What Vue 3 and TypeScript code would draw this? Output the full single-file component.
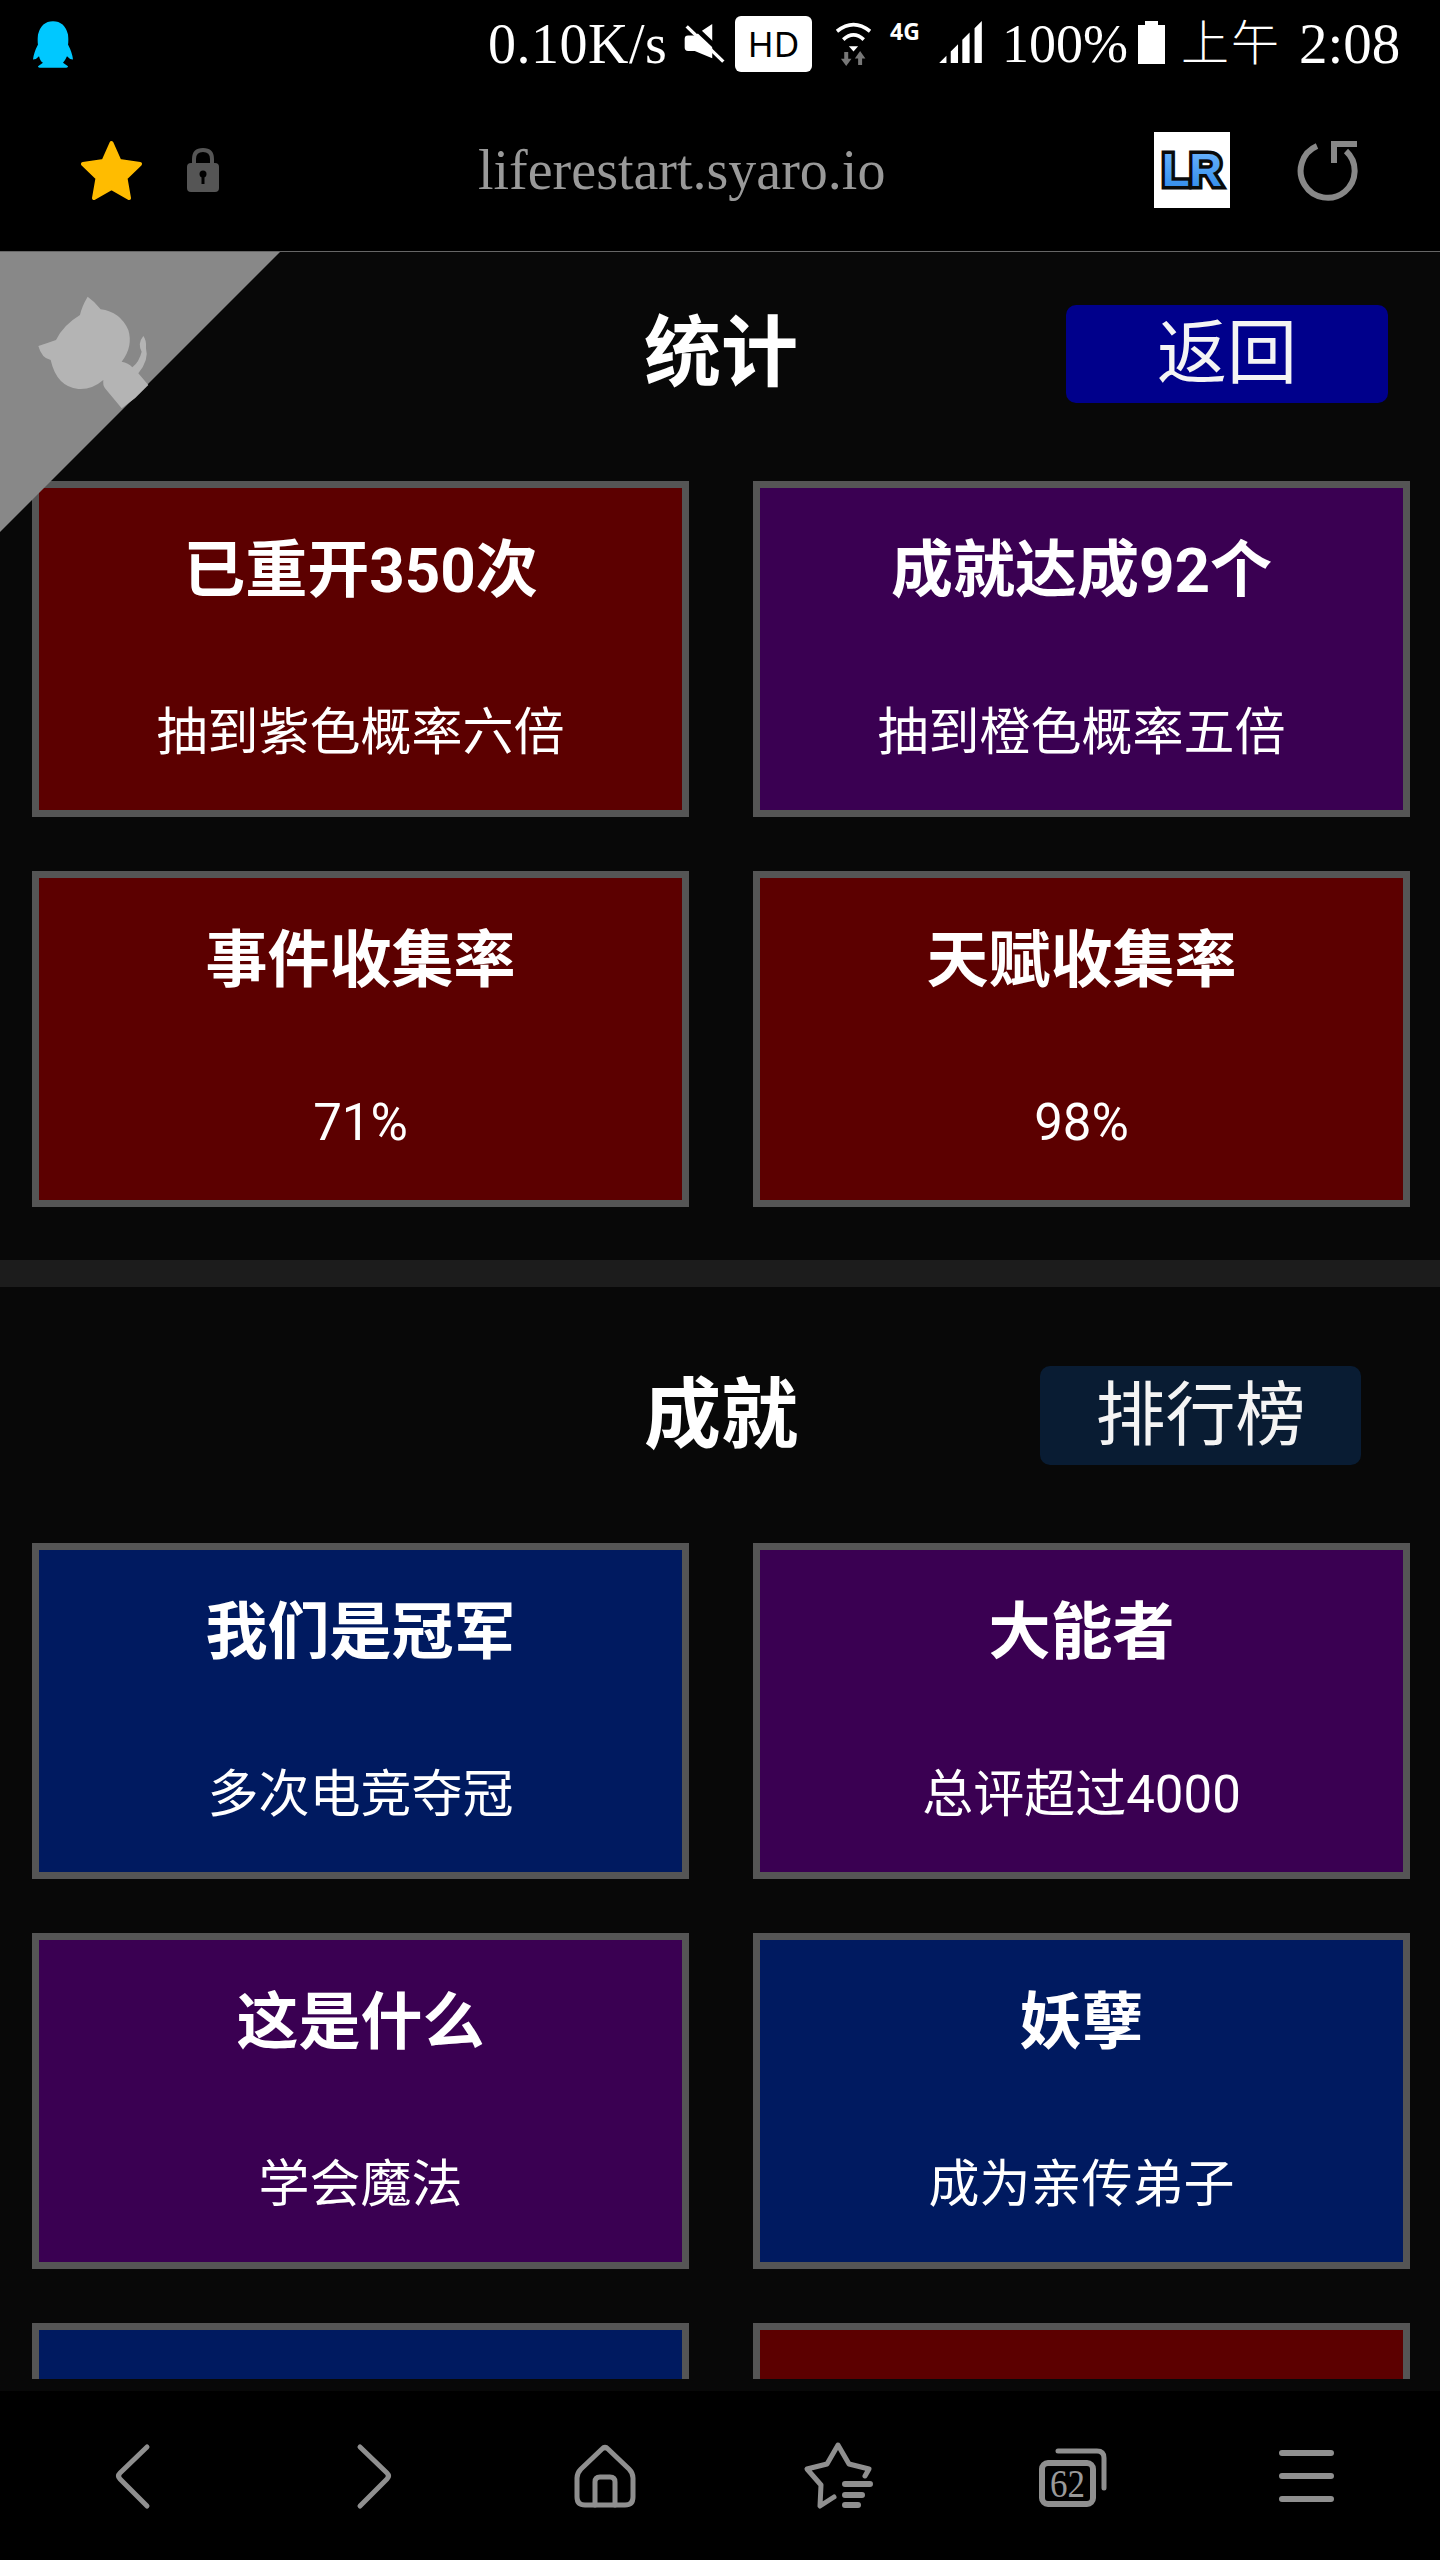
<script setup lang="ts">
type Tone = 'red' | 'purple' | 'blue';

interface Card {
  title: string;
  desc: string;
  tone: Tone;
}

const statCards: Card[] = [
  { title: '已重开350次', desc: '抽到紫色概率六倍', tone: 'red' },
  { title: '成就达成92个', desc: '抽到橙色概率五倍', tone: 'purple' },
  { title: '事件收集率', desc: '71%', tone: 'red' },
  { title: '天赋收集率', desc: '98%', tone: 'red' }
];

const achievementCards: Card[] = [
  { title: '我们是冠军', desc: '多次电竞夺冠', tone: 'blue' },
  { title: '大能者', desc: '总评超过4000', tone: 'purple' },
  { title: '这是什么', desc: '学会魔法', tone: 'purple' },
  { title: '妖孽', desc: '成为亲传弟子', tone: 'blue' },
  { title: '', desc: '', tone: 'blue' },
  { title: '', desc: '', tone: 'red' }
];
</script>

<template>
  <div class="phone">
    <div class="status-bar">
      <svg class="penguin" viewBox="40 40 120 140" width="40" height="47">
        <path fill="#00c8ff" d="M100 40Q135 40 145 80Q147 100 145 110Q158 135 160 155Q150 155 142 145Q135 160 130 165L145 175Q145 180 135 180L65 180Q55 180 55 175L70 165Q62 160 58 145Q50 155 40 155Q42 135 55 110Q53 100 55 80Q65 40 100 40Z" />
      </svg>
      <div class="status-right">
        <span class="speed">0.10K/s</span>
        <svg class="mute" viewBox="35 45 125 125" width="42" height="42">
          <path fill="#fff" d="M40 92Q40 82 50 82L70 82L122 48V150L70 128L50 128Q40 128 40 118Z" />
          <path stroke="#000" stroke-width="14" d="M62 50L172 155" />
          <path stroke="#fff" stroke-width="10" d="M46 55L155 160" />
        </svg>
        <div class="hd">HD</div>
        <svg class="wifi" viewBox="480 35 130 140" width="43" height="47">
          <path fill="none" stroke="#fff" stroke-width="11" d="M495 65Q545 25 595 65" />
          <path fill="none" stroke="#fff" stroke-width="11" d="M514 90Q545 62 576 90" />
          <path fill="#fff" d="M531 110H559L545 126Z" />
          <path fill="#777" d="M517 128H529V148H539L523 170L507 148H517Z" />
          <path fill="#777" d="M565 125L581 147H571V167H559V147H549Z" />
        </svg>
        <span class="net">4G</span>
        <svg class="signal" viewBox="808 43 129 127" width="43" height="42">
          <path fill="#fff" d="M808 170L830 148V170ZM843 135L865 113V170H843ZM878 100L900 78V170H878ZM915 65L937 43V170H915Z" />
        </svg>
        <span class="percent">100%</span>
        <svg class="battery" viewBox="0 0 27 43" width="27" height="43">
          <path fill="#fff" d="M7 0H20V4H27V43H0V4H7Z" />
        </svg>
        <span class="ampm">上午</span>
        <span class="clock">2:08</span>
      </div>
    </div>

    <div class="url-bar">
      <svg class="fav" viewBox="0 0 61 60" width="61" height="60">
        <path fill="#ffbc00" stroke="#ffbc00" stroke-width="4" stroke-linejoin="round" d="M30.5 3L38.5 21L59 24L44.5 38L48 58L30.5 48L13 58L16.5 38L2 24L22.5 21Z" />
      </svg>
      <svg class="lock" viewBox="0 0 32 44" width="32" height="44">
        <path fill="none" stroke="#555" stroke-width="4" d="M7 18V11Q7 2 16 2Q25 2 25 11V18" />
        <rect y="15" width="32" height="29" rx="4" fill="#555" />
        <circle cx="16" cy="26" r="3.5" fill="#000" />
        <rect x="14.5" y="27" width="3" height="9" fill="#000" />
      </svg>
      <span class="address">liferestart.syaro.io</span>
      <svg class="logo" viewBox="0 0 76 76" width="76" height="76">
        <defs>
          <linearGradient id="lrFill" x1="0" y1="0" x2="0" y2="1">
            <stop offset="0" stop-color="#70b8ff" />
            <stop offset="1" stop-color="#2a86e8" />
          </linearGradient>
        </defs>
        <rect width="76" height="76" fill="#fff" />
        <text class="logo-text" x="8" y="54" textLength="60" lengthAdjust="spacingAndGlyphs">LR</text>
      </svg>
      <svg class="reload" viewBox="0 0 64 64" width="64" height="64">
        <g fill="none" stroke="#888" stroke-width="6">
          <path d="M21 8A27 27 0 1 0 50 13" />
          <path d="M38 25V6H61" />
        </g>
      </svg>
    </div>

    <div class="viewport">
      <div class="page">
        <section class="section first">
          <header class="head">
            <h2 class="head-title">统计</h2>
            <button class="head-btn back">返回</button>
          </header>
          <div class="grid">
            <div v-for="card in statCards" :key="card.title" class="card" :class="card.tone">
              <div class="card-title">{{ card.title }}</div>
              <div class="card-desc">{{ card.desc }}</div>
            </div>
          </div>
        </section>
        <div class="divider"></div>
        <section class="section second">
          <header class="head">
            <h2 class="head-title">成就</h2>
            <button class="head-btn rank">排行榜</button>
          </header>
          <div class="grid">
            <div v-for="(card, i) in achievementCards" :key="i" class="card" :class="card.tone">
              <div class="card-title">{{ card.title }}</div>
              <div class="card-desc">{{ card.desc }}</div>
            </div>
          </div>
        </section>
      </div>

      <svg class="corner" viewBox="0 0 280 280" width="280" height="280">
        <path fill="#888" d="M0 0H280L0 280Z" />
        <g transform="translate(20 28) scale(0.3333)">
          <path fill="#b4b4b4" d="M203 50Q225 65 242 88Q300 95 325 150Q340 200 305 245Q325 248 337 262Q358 245 365 215Q352 190 370 168Q380 180 378 205Q388 240 355 280L385 315L345 355L305 385L255 325Q248 315 250 300Q215 330 175 327Q110 320 92 240Q65 235 55 198Q80 190 108 180Q130 135 180 105Q185 80 203 50Z" />
        </g>
      </svg>
    </div>
    <div class="viewport-end"></div>

    <nav class="nav">
      <svg viewBox="0 0 80 80" width="80" height="80">
        <path class="line" d="M54 11L27 37Q24 40 27 43L54 70" />
      </svg>
      <svg viewBox="0 0 80 80" width="80" height="80">
        <path class="line" d="M32 11L59 37Q62 40 59 43L32 70" />
      </svg>
      <svg viewBox="0 0 80 80" width="80" height="80">
        <path class="line" d="M39 13Q42 10 45 13L66 33Q70 37 70 42L70 61Q70 69 62 69L22 69Q14 69 14 61L14 42Q14 37 18 33Z" />
        <path class="line" d="M32 69L32 46Q32 41 37 41L47 41Q52 41 52 46L52 69" />
      </svg>
      <svg viewBox="0 0 80 80" width="80" height="80">
        <path class="line" d="M36 61L22 70L23 49L9 33L29 28L40 9L51 28L71 33L67 40" />
        <path class="line thick" d="M47 48H72M47 59H64M47 69H60" />
      </svg>
      <svg viewBox="0 0 80 80" width="80" height="80">
        <rect class="line thick" x="9" y="27" width="51" height="41" rx="6" />
        <path class="line" d="M25 15H64Q71 15 71 22V52" />
        <text class="tab-count" x="17" y="61" textLength="35" lengthAdjust="spacingAndGlyphs">62</text>
      </svg>
      <svg viewBox="0 0 80 80" width="80" height="80">
        <path class="line thick" d="M14 17H63M14 40H63M14 63H63" />
      </svg>
    </nav>
  </div>
</template>

<style scoped>
.phone {
  width: 1440px;
  height: 2560px;
  display: flex;
  flex-direction: column;
  background: #000;
  color: #fff;
  font-family: Roboto, "Noto Sans CJK SC", sans-serif;
  overflow: hidden;
}

.status-bar {
  height: 88px;
  flex: none;
  display: flex;
  align-items: center;
  padding-left: 33px;
}

.status-right {
  margin-left: 415px;
  display: flex;
  align-items: center;
  font-family: "Liberation Serif", "Noto Sans CJK SC", serif;
  font-size: 56px;
  line-height: 88px;
  white-space: nowrap;
}

.speed {
  width: 178px;
  letter-spacing: 0.5px;
}

.mute {
  margin-left: 17px;
}

.hd {
  margin-left: 10px;
  width: 77px;
  height: 56px;
  border-radius: 6px;
  background: #fff;
  color: #000;
  font-family: "Noto Sans", sans-serif;
  font-size: 35px;
  line-height: 56px;
  text-align: center;
}

.wifi {
  margin-left: 20px;
}

.net {
  margin-left: 15px;
  margin-bottom: 26px;
  width: 33px;
  font-family: "Noto Sans", sans-serif;
  font-weight: 700;
  font-size: 23px;
  line-height: 24px;
}

.signal {
  margin-left: 16px;
  margin-bottom: 4px;
}

.percent {
  margin-left: 20px;
  width: 125px;
  font-size: 54px;
}

.battery {
  margin-left: 11px;
  margin-bottom: 4px;
}

.ampm {
  margin-left: 16px;
  width: 98px;
  font-size: 48px;
  font-weight: 300;
  letter-spacing: 2px;
}

.clock {
  margin-left: 20px;
  font-size: 57px;
}

.url-bar {
  height: 163px;
  flex: none;
  box-sizing: border-box;
  display: flex;
  align-items: center;
  padding-left: 81px;
  padding-right: 80px;
}

.lock {
  margin-left: 45px;
}

.address {
  margin-left: 259px;
  font-family: "Liberation Serif", serif;
  font-size: 56px;
  color: #999;
  white-space: nowrap;
}

.logo {
  margin-left: auto;
}

.logo-text {
  font-family: "Liberation Sans", sans-serif;
  font-weight: 700;
  font-size: 46px;
  fill: url(#lrFill);
  stroke: #0a0a0a;
  stroke-width: 7px;
  paint-order: stroke;
}

.reload {
  margin-left: 66px;
}

.viewport {
  position: relative;
  height: 2128px;
  flex: none;
  border-top: 1px solid #666;
  box-sizing: border-box;
  overflow: hidden;
  background: #080808;
}

.viewport-end {
  height: 12px;
  flex: none;
  background: #080808;
}

.section.first {
  padding-top: 53px;
  padding-bottom: 53px;
}

.section.second {
  padding-top: 79px;
}

.head {
  display: grid;
  grid-template-columns: 1fr auto 1fr;
  align-items: center;
}

.first .head {
  margin-bottom: 78px;
}

.second .head {
  margin-bottom: 78px;
}

.head-title {
  grid-column: 2;
  margin: 0;
  padding-left: 2px;
  font-size: 77px;
  font-weight: 700;
  line-height: 98px;
}

.head-btn {
  justify-self: end;
  border: 0;
  border-radius: 10px;
  color: #f4f4f4;
  font-family: inherit;
  font-size: 70px;
  line-height: 1;
  padding: 0;
}

.back {
  width: 322px;
  height: 98px;
  margin-right: 52px;
  background: #00008b;
}

.rank {
  width: 321px;
  height: 99px;
  margin-right: 79px;
  background: #091c33;
}

.divider {
  height: 27px;
  background: #1c1c1c;
}

.grid {
  display: grid;
  grid-template-columns: 657px 657px;
  column-gap: 64px;
  row-gap: 54px;
  padding: 0 30px 0 32px;
}

.card {
  box-sizing: border-box;
  height: 336px;
  border: 7px solid #555;
  padding-top: 48px;
  text-align: center;
}

.red {
  background: #5c0000;
}

.purple {
  background: #3a0052;
}

.blue {
  background: #001a60;
}

.card-title {
  height: 70px;
  font-size: 62px;
  font-weight: 700;
  line-height: 70px;
}

.card-desc {
  margin-top: 97px;
  font-size: 51px;
  line-height: 60px;
}

.corner {
  position: absolute;
  top: 0;
  left: 0;
}

.nav {
  flex: 1;
  display: grid;
  grid-template-columns: repeat(6, 235px);
  justify-items: center;
  align-items: center;
  padding: 0 15px;
}

.line {
  fill: none;
  stroke: #8f8f8f;
  stroke-width: 5;
  stroke-linecap: round;
  stroke-linejoin: round;
}

.thick {
  stroke-width: 6;
}

.tab-count {
  font-family: "Liberation Serif", serif;
  font-size: 40px;
  fill: #999;
}
</style>

<style>
html,
body {
  background: #000;
}
</style>
